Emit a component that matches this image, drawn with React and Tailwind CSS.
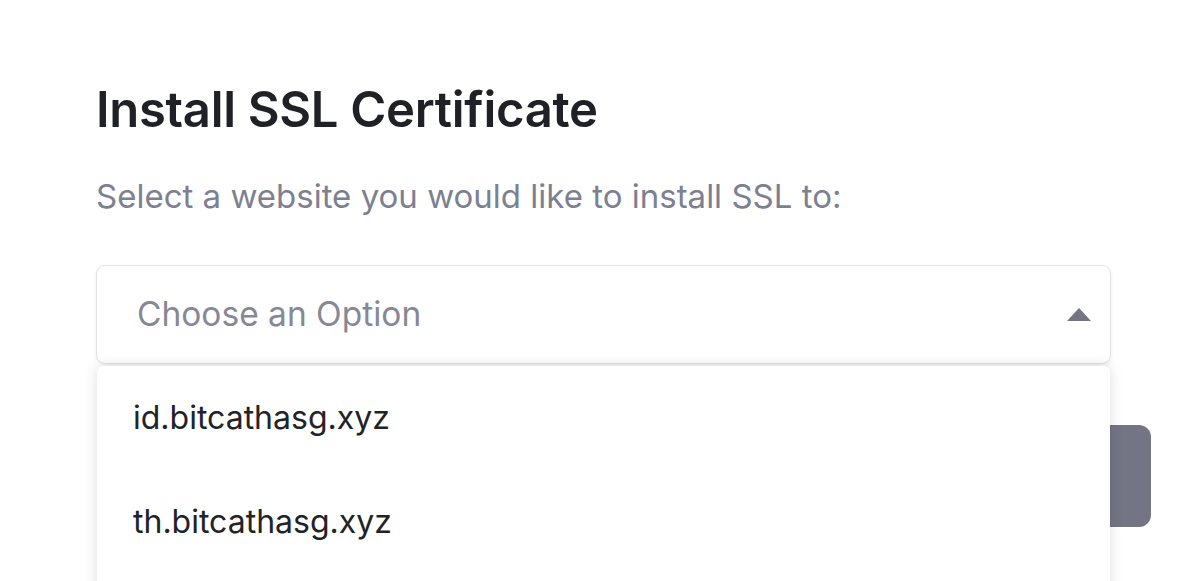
import React from "react";

const options = ["id.bitcathasg.xyz", "th.bitcathasg.xyz"];

const App = () => {
  return (
    <div
      className="h-[581px] w-full overflow-hidden bg-white pl-[96px] pr-[49px] pt-[82px]"
      style={{ fontFamily: "Inter, 'Noto Sans', sans-serif" }}
    >
      <h1 className="text-[49px] font-semibold leading-[56px] tracking-[-0.3px] text-[#1f2126]">
        Install SSL Certificate
      </h1>
      <p className="mt-[38px] text-[33px] leading-[40px] text-[#7d8091]">
        Select a website you would like to install SSL to:
      </p>

      {/* Select with open dropdown */}
      <div className="relative z-10 mt-[49px] w-[1015px]">
        <button
          type="button"
          className="flex h-[99px] w-full items-center justify-between rounded-[9px] border border-[#e2e2e6] bg-white pl-[40px] pr-[18px] shadow-[0_2px_4px_rgba(0,0,0,0.06)]"
        >
          <span className="text-[33.5px] text-[#868898]">Choose an Option</span>
          <svg width="26" height="14" viewBox="0 0 26 14">
            <path d="M13 0 L25 13 L1 13 Z" fill="#737585" />
          </svg>
        </button>

        <ul className="absolute left-px right-px top-full mt-[2px] h-[300px] rounded-t-[6px] bg-white shadow-[0_0_14px_rgba(0,0,0,0.13)]">
          {options.map((opt) => (
            <li
              key={opt}
              className="flex h-[104px] items-center pl-[36px] text-[32px] text-[#222327]"
            >
              {opt}
            </li>
          ))}
        </ul>
      </div>

      <div className="mt-[61px] flex justify-end">
        <button
          type="button"
          className="h-[102px] w-[300px] rounded-[12px] bg-[#737585] text-[30px] font-bold text-white"
        >
          Install
        </button>
      </div>
    </div>
  );
};

export default App;
